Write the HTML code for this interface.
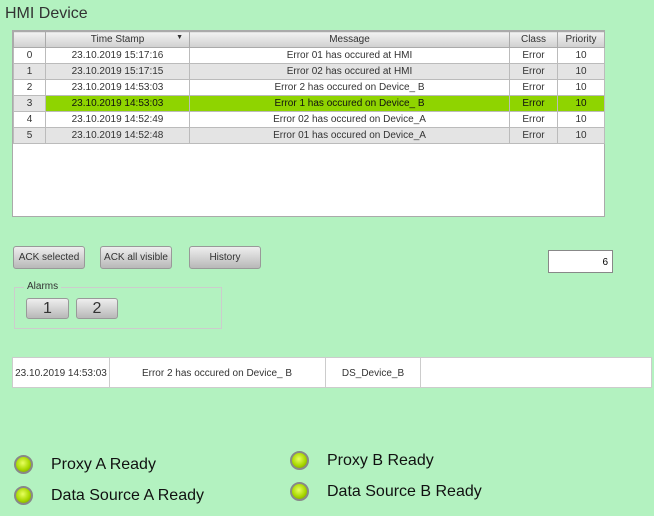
<!DOCTYPE html>
<html><head><style>
body{margin:0;width:654px;height:516px;background:#b3f2c0;font-family:"Liberation Sans",sans-serif;position:relative;overflow:hidden}
.a{position:absolute}
table{border-collapse:collapse;font-size:10px;color:#333}
td{border:1px solid #bbb;text-align:center;height:15px;padding:0;line-height:15px}
th{font-weight:normal;font-size:10px;color:#333;background:linear-gradient(#f2f2f2,#d0d0d0);border:1px solid #aaa;height:15px;padding:0}
tr.g td{background:#e4e4e4}
tr.s td{background:#8fd400;color:#111}
.btn{position:absolute;background:linear-gradient(#eee,#b8b8b8);border:1px solid #999;border-radius:3px;font-size:10px;color:#333;text-align:center;box-sizing:border-box}
.led{position:absolute;width:19px;height:19px;border-radius:50%;background:radial-gradient(circle at 45% 40%,#e8ff60,#a8d800 55%,#6a9000);border:2px solid #888;box-sizing:border-box}
.lt{position:absolute;font-size:16px;color:#111}
</style></head><body>
<div class="a" style="left:5px;top:5px;font-size:16px;color:#333">HMI Device</div>
<div class="a" style="left:12px;top:30px;width:593px;height:187px;background:#fff;border:1px solid #aaa;box-sizing:border-box">
<table style="width:592px;margin:0">
<tr><th style="width:31px"></th><th style="width:143px;position:relative">Time Stamp<span style="position:absolute;right:6px;font-size:7px">▼</span></th><th style="width:319px">Message</th><th style="width:47px">Class</th><th>Priority</th></tr>
<tr><td>0</td><td>23.10.2019 15:17:16</td><td>Error 01 has occured at HMI</td><td>Error</td><td>10</td></tr>
<tr class="g"><td>1</td><td>23.10.2019 15:17:15</td><td>Error 02 has occured at HMI</td><td>Error</td><td>10</td></tr>
<tr><td>2</td><td>23.10.2019 14:53:03</td><td>Error 2 has occured on Device_ B</td><td>Error</td><td>10</td></tr>
<tr class="s"><td style="background:#e4e4e4;color:#333">3</td><td>23.10.2019 14:53:03</td><td>Error 1 has occured on Device_ B</td><td>Error</td><td>10</td></tr>
<tr><td>4</td><td>23.10.2019 14:52:49</td><td>Error 02 has occured on Device_A</td><td>Error</td><td>10</td></tr>
<tr class="g"><td>5</td><td>23.10.2019 14:52:48</td><td>Error 01 has occured on Device_A</td><td>Error</td><td>10</td></tr>
</table></div>
<div class="btn" style="left:13px;top:246px;width:72px;height:23px;line-height:21px">ACK selected</div>
<div class="btn" style="left:100px;top:246px;width:72px;height:23px;line-height:21px">ACK all visible</div>
<div class="btn" style="left:189px;top:246px;width:72px;height:23px;line-height:21px">History</div>
<div class="a" style="left:548px;top:250px;width:65px;height:23px;background:#fff;border:1px solid #888;box-sizing:border-box;font-size:10px;text-align:right;padding-right:4px;padding-top:3px;line-height:17px">6</div>
<div class="a" style="left:14px;top:287px;width:208px;height:42px;border:1px solid #ccc;box-sizing:border-box"></div>
<div class="a" style="left:24px;top:281px;font-size:10px;color:#333;background:#b3f2c0;padding:0 3px">Alarms</div>
<div class="btn" style="left:26px;top:298px;width:43px;height:21px;font-size:16px;line-height:19px">1</div>
<div class="btn" style="left:76px;top:298px;width:42px;height:21px;font-size:16px;line-height:19px">2</div>
<div class="a" style="left:12px;top:357px;width:640px;height:31px;background:#fff;border:1px solid #ccc;box-sizing:border-box;font-size:10px;color:#333">
<div class="a" style="left:0;top:0;width:96px;height:29px;border-right:1px solid #ccc;line-height:31px;text-align:center">23.10.2019 14:53:03</div>
<div class="a" style="left:96px;top:0;width:216px;height:29px;border-right:1px solid #ccc;line-height:31px;text-align:center">Error 2 has occured on Device_ B</div>
<div class="a" style="left:313px;top:0;width:94px;height:29px;border-right:1px solid #ccc;line-height:31px;text-align:center">DS_Device_B</div>
</div>
<div class="led" style="left:14px;top:455px"></div><div class="lt" style="left:51px;top:456px">Proxy A Ready</div>
<div class="led" style="left:14px;top:486px"></div><div class="lt" style="left:51px;top:487px">Data Source A Ready</div>
<div class="led" style="left:290px;top:451px"></div><div class="lt" style="left:327px;top:452px">Proxy B Ready</div>
<div class="led" style="left:290px;top:482px"></div><div class="lt" style="left:327px;top:483px">Data Source B Ready</div>
</body></html>
